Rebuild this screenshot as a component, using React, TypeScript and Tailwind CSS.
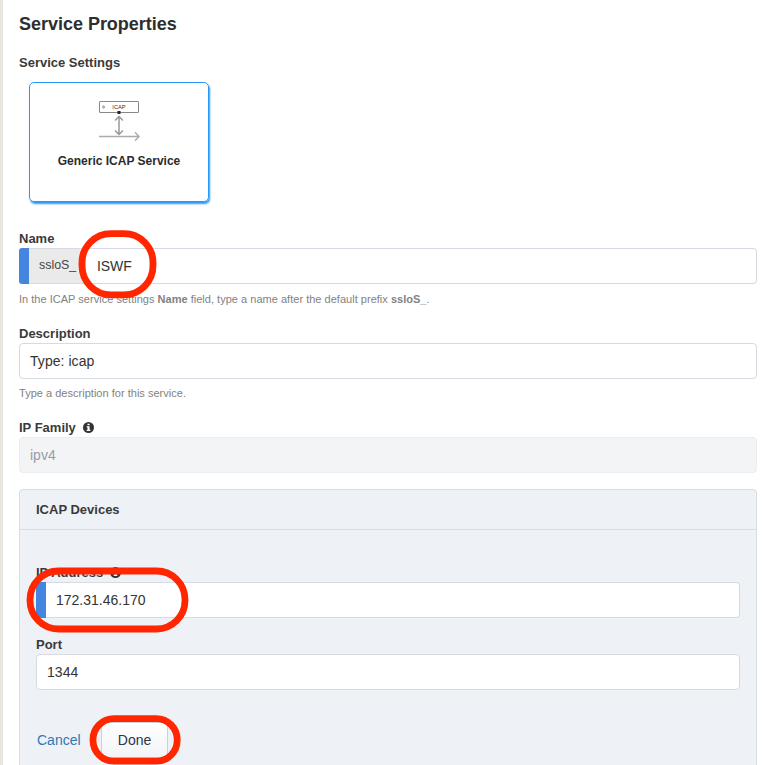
import type { ReactNode } from "react";

function InfoIcon() {
  return (
    <svg width="11" height="11" viewBox="0 0 12 12" className="mb-px ml-[7px]">
      <circle cx="6" cy="6" r="6" fill="#333" />
      <path d="M4.9 1.8h2.3v1.8H4.9zM4 4.6h3.2v3.8H8v1.5H4V8.4h.9V6.1H4z" fill="#fff" />
    </svg>
  );
}

function Label({ children, info }: { children: ReactNode; info?: boolean }) {
  return (
    <label className="flex h-[18px] items-center text-[13px] leading-[18px] font-bold whitespace-nowrap text-[#3a3a3a]">
      {children}
      {info && <InfoIcon />}
    </label>
  );
}

function Field({ children }: { children: ReactNode }) {
  return (
    <div className="flex h-9 items-center overflow-hidden rounded border border-[#d7dae3] bg-white px-[10px] text-sm tracking-[0.05px] text-[#333]">
      {children}
    </div>
  );
}

function Help({ children }: { children: ReactNode }) {
  return <p className="h-[18px] text-[11px] leading-[18px] tracking-[0.02px] whitespace-nowrap text-[#828282]">{children}</p>;
}

function IcapIcon() {
  return (
    <svg width="42" height="42" viewBox="0 0 42 42" fill="none">
      <rect x="1.5" y="1.5" width="39" height="11" rx="0.5" stroke="#888" />
      <ellipse cx="5.5" cy="7" rx="0.9" ry="1.2" stroke="#777" strokeWidth="0.8" />
      <text x="21" y="9" textAnchor="middle" fontSize="5.7" fontFamily="Liberation Sans, sans-serif" fill="#333">ICAP</text>
      <rect x="19.5" y="11" width="3" height="3" fill="#222" />
      <path d="M21 16.5v18M17 20.5l4-4 4 4M17 30.5l4 4 4-4" stroke="#999" strokeWidth="1.5" />
      <path d="M1 36.5h40M37 32.3l4 4.2-4 4.2" stroke="#aaa" strokeWidth="1.4" />
    </svg>
  );
}

export default function App() {
  return (
    <div className="relative flex h-[765px] w-[764px] overflow-hidden bg-white font-['Liberation_Sans',Arial,sans-serif]">
      <div className="w-[3px] shrink-0 bg-[#e8e6df]" />
      <main className="flex min-w-0 flex-1 flex-col pr-[7px] pl-4">
        <h1 className="mt-3 h-6 text-lg leading-6 font-bold tracking-[-0.02px] whitespace-nowrap text-[#2e2e2e]">Service Properties</h1>
        <div className="mt-[18px]"><Label>Service Settings</Label></div>
        <div className="mt-[10px] ml-[10px] flex h-[120px] w-[180px] shrink-0 flex-col items-center rounded-[5px] border border-[#2b97f5] pt-[17px] shadow-[1px_2px_2px_#2b97f5]">
          <IcapIcon />
          <span className="mt-[10px] text-xs leading-[18px] font-bold text-[#2b2b2b]">Generic ICAP Service</span>
        </div>

        <div className="mt-[28px]">
          <Label>Name</Label>
          <div className="flex h-9 items-stretch text-sm">
            <span className="w-[10px] rounded-l-[3px] bg-[#4385df]" />
            <span className="flex w-[57px] items-center border-y border-[#d7dae3] bg-[#eaeaea] pl-[10px] text-[12.4px] text-[#444]">ssloS_</span>
            <span className="flex flex-1 items-center rounded-r border border-l-0 border-[#d7dae3] pl-[11px] tracking-[-0.1px] text-[#333]">ISWF</span>
          </div>
          <div className="mt-1.5"><Help>In the ICAP service settings <b>Name</b> field, type a name after the default prefix <b>ssloS_</b>.</Help></div>
        </div>

        <div className="mt-[17px]">
          <Label>Description</Label>
          <Field>Type: icap</Field>
          <div className="mt-[5px]"><Help>Type a description for this service.</Help></div>
        </div>

        <div className="mt-[17px]">
          <Label info>IP Family</Label>
          <div className="flex h-9 items-center rounded border border-[#ebedf0] bg-[#f3f4f6] px-[10px] text-sm text-[#999ba3]">ipv4</div>
        </div>

        <section className="mt-4 h-[290px] shrink-0 rounded-t border border-[#d7dce3] bg-[#eef1f6]">
          <h2 className="flex h-10 items-center border-b border-[#d7dce3] pl-4 text-[13px] font-bold text-[#3a3a3a]">ICAP Devices</h2>
          <div className="px-4 pt-[34px]">
            <Label info>IP Address</Label>
            <div className="flex h-9 items-stretch text-sm text-[#333]">
              <span className="w-[10px] rounded-l-[3px] bg-[#4385df]" />
              <span className="flex flex-1 items-center rounded-r border border-l-0 border-[#d7dae3] bg-white pl-[10px]">172.31.46.170</span>
            </div>
            <div className="mt-[18px]">
              <Label>Port</Label>
              <Field>1344</Field>
            </div>
            <div className="mt-8 flex items-center text-sm">
              <a className="w-[65px] pl-px text-[#3276b5]">Cancel</a>
              <button className="h-9 w-[67px] rounded border border-[#cbd0da] bg-linear-to-b from-white to-[#f3f4f7] text-[#2d3647]">Done</button>
            </div>
          </div>
        </section>
      </main>

      <svg className="pointer-events-none absolute inset-0" width="764" height="765" fill="none" stroke="#ff2600" strokeWidth="6.8">
        <rect x="82" y="233.6" width="71" height="61.2" rx="29" />
        <rect x="30" y="571" width="155" height="58" rx="28.5" />
        <rect x="93" y="718.6" width="84.2" height="42.6" rx="21" />
      </svg>
    </div>
  );
}
